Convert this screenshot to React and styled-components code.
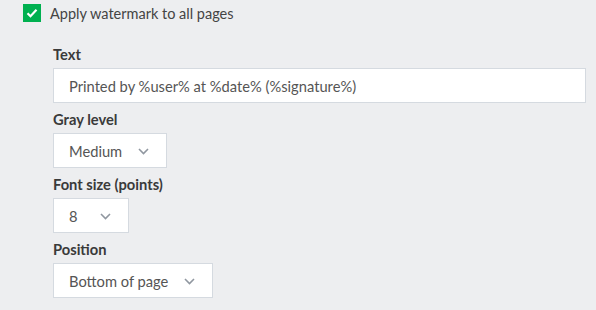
import React from "react";
import styled, { createGlobalStyle } from "styled-components";

const GlobalStyle = createGlobalStyle`
  html, body {
    margin: 0;
    padding: 0;
    background: #edeef0;
    font-family: "Lato", "Liberation Sans", sans-serif;
  }
`;

const Page = styled.div`
  padding: 4px 0 0 23px;
  width: 596px;
  height: 310px;
  box-sizing: border-box;
`;

const CheckRow = styled.label`
  display: flex;
  align-items: center;
  gap: 9px;
  height: 18px;
  font-size: 14.5px;
  color: #444;
  cursor: pointer;
`;

const Box = styled.span`
  width: 18px;
  height: 18px;
  background: #00b050;
  display: flex;
  align-items: center;
  justify-content: center;
`;

const Fields = styled.div`
  margin: 22px 0 0 30px;
  display: flex;
  flex-direction: column;
  gap: 6px;
  width: 533px;
`;

const Field = styled.div`
  display: flex;
  flex-direction: column;
  align-items: flex-start;
`;

const Label = styled.div`
  font-size: 14.7px;
  line-height: 20px;
  font-weight: 700;
  color: #3a3a3a;
  margin-bottom: 4px;
`;

const TextInput = styled.input`
  box-sizing: border-box;
  width: 100%;
  height: 35px;
  border: 1px solid #d5dae0;
  background: #fff;
  padding: 0 15px;
  font: inherit;
  font-size: 14.7px;
  color: #555;
  outline: none;
`;

const Select = styled.div`
  position: relative;
  box-sizing: border-box;
  height: 35px;
  min-width: ${(p) => p.$min || 0}px;
  border: 1px solid #d5dae0;
  background: #fff;
  padding: 0 44px 0 15px;
  display: flex;
  align-items: center;
  font-size: 14.7px;
  color: #555;
`;

const Chevron = styled.svg`
  position: absolute;
  right: 17px;
  top: 14px;
`;

function Dropdown({ value, min }) {
  return (
    <Select $min={min}>
      {value}
      <Chevron width="11" height="7" viewBox="0 0 11 7">
        <path d="M1 1l4.5 4.5L10 1" fill="none" stroke="#9097a0" strokeWidth="1.6" />
      </Chevron>
    </Select>
  );
}

export default function App() {
  return (
    <>
      <GlobalStyle />
      <Page>
        <CheckRow>
          <Box>
            <svg width="12" height="10" viewBox="0 0 12 10">
              <path d="M1.5 5.2l3 3L10.5 1.8" fill="none" stroke="#fff" strokeWidth="2.2" />
            </svg>
          </Box>
          Apply watermark to all pages
        </CheckRow>
        <Fields>
          <Field>
            <Label>Text</Label>
            <TextInput defaultValue="Printed by %user% at %date% (%signature%)" />
          </Field>
          <Field>
            <Label>Gray level</Label>
            <Dropdown value="Medium" />
          </Field>
          <Field>
            <Label>Font size (points)</Label>
            <Dropdown value="8" min={76} />
          </Field>
          <Field>
            <Label>Position</Label>
            <Dropdown value="Bottom of page" />
          </Field>
        </Fields>
      </Page>
    </>
  );
}
